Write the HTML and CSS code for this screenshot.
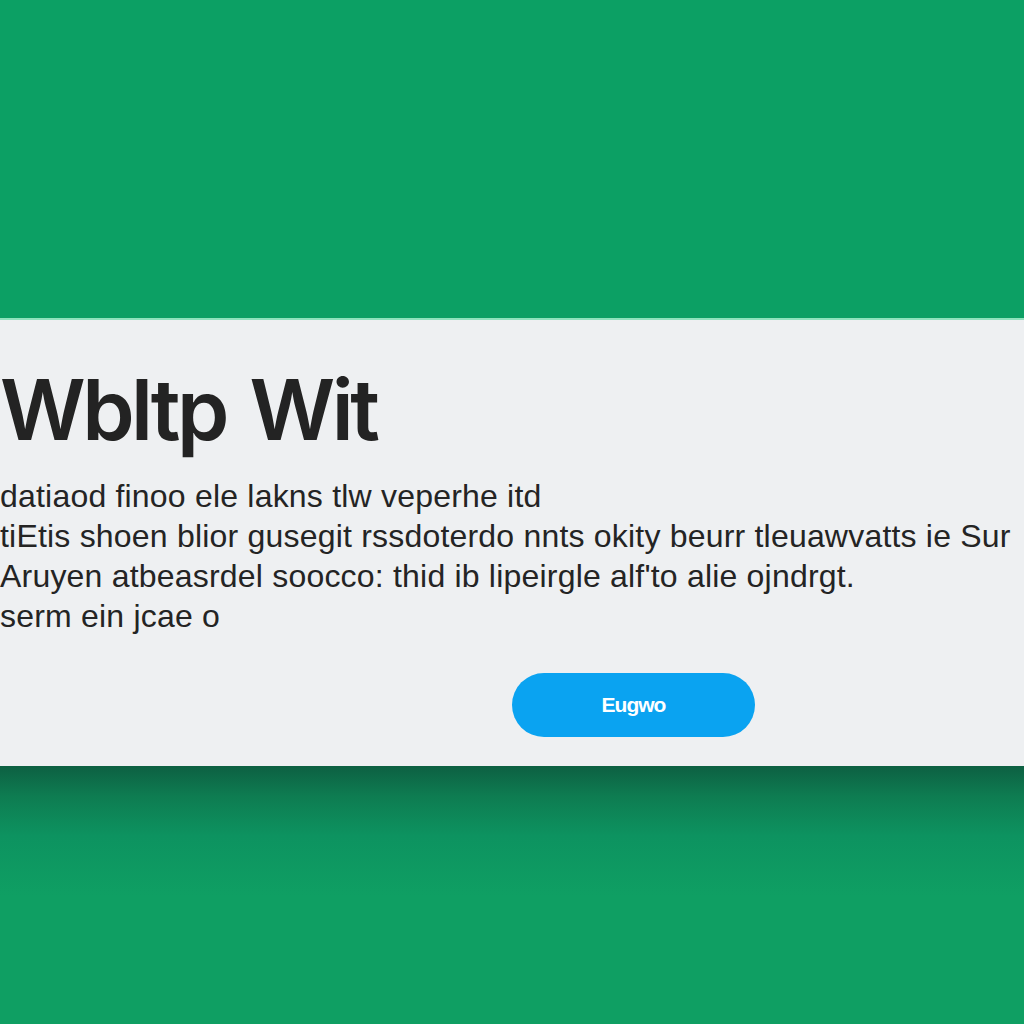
FILE: index.html
```html
<!DOCTYPE html>
<html>
<head>
<meta charset="utf-8">
<link rel="stylesheet" href="styles.css">
</head>
<body>
<div class="page">
  <div class="top"></div>
  <section class="panel">
    <h1 class="title">Wbltp <span class="gap">Wit</span></h1>
    <div class="body">
      <p class="line">datiaod finoo ele lakns tlw veperhe itd</p>
      <p class="line">tiEtis shoen blior gusegit rssdoterdo nnts okity beurr tleuawvatts ie Sur</p>
      <p class="line">Aruyen atbeasrdel soocco: thid ib lipeirgle alf'to alie ojndrgt.</p>
      <p class="line">serm ein jcae o</p>
    </div>
    <div class="actions">
      <button class="btn">Eugwo</button>
    </div>
  </section>
  <div class="bottom"></div>
</div>
</body>
</html>
```

FILE: styles.css
```css
html, body {
  margin: 0;
  padding: 0;
}
body {
  background: #0f9f63;
  font-family: "Liberation Sans", Arial, sans-serif;
  overflow: hidden;
}
.page {
  width: 1024px;
  height: 1024px;
  display: flex;
  flex-direction: column;
}
.top {
  height: 318px;
  background: #0ca064;
  border-bottom: 2px solid #8fe3bd;
}
.panel {
  height: 446px;
  background: #eef0f2;
  box-sizing: border-box;
  padding: 40px 0 0 0;
  display: flex;
  flex-direction: column;
  overflow: hidden;
}
.title {
  margin: 0;
  font-family: Inter, "Liberation Sans", sans-serif;
  font-size: 84px;
  font-weight: 600;
  color: #232323;
  letter-spacing: -3.5px;
  line-height: 100px;
  white-space: nowrap;
}
.gap {
  margin-left: 6px;
}
.body {
  margin-top: 16px;
  display: flex;
  flex-direction: column;
}
.line {
  margin: 0;
  font-size: 32px;
  line-height: 40px;
  color: #242424;
  white-space: nowrap;
  letter-spacing: 0.2px;
}
.actions {
  display: flex;
  padding-left: 512px;
  margin-top: 37px;
}
.btn {
  width: 243px;
  height: 64px;
  border: none;
  border-radius: 32px;
  background: #0aa3f1;
  color: #ffffff;
  font-family: "Liberation Sans", Arial, sans-serif;
  font-size: 21px;
  font-weight: 700;
  letter-spacing: -1px;
  padding: 0;
}
.bottom {
  flex: 1;
  background: linear-gradient(#0d6042 0px, #0e7c51 30px, #0d9360 70px, #0f9f63 130px);
}
```
